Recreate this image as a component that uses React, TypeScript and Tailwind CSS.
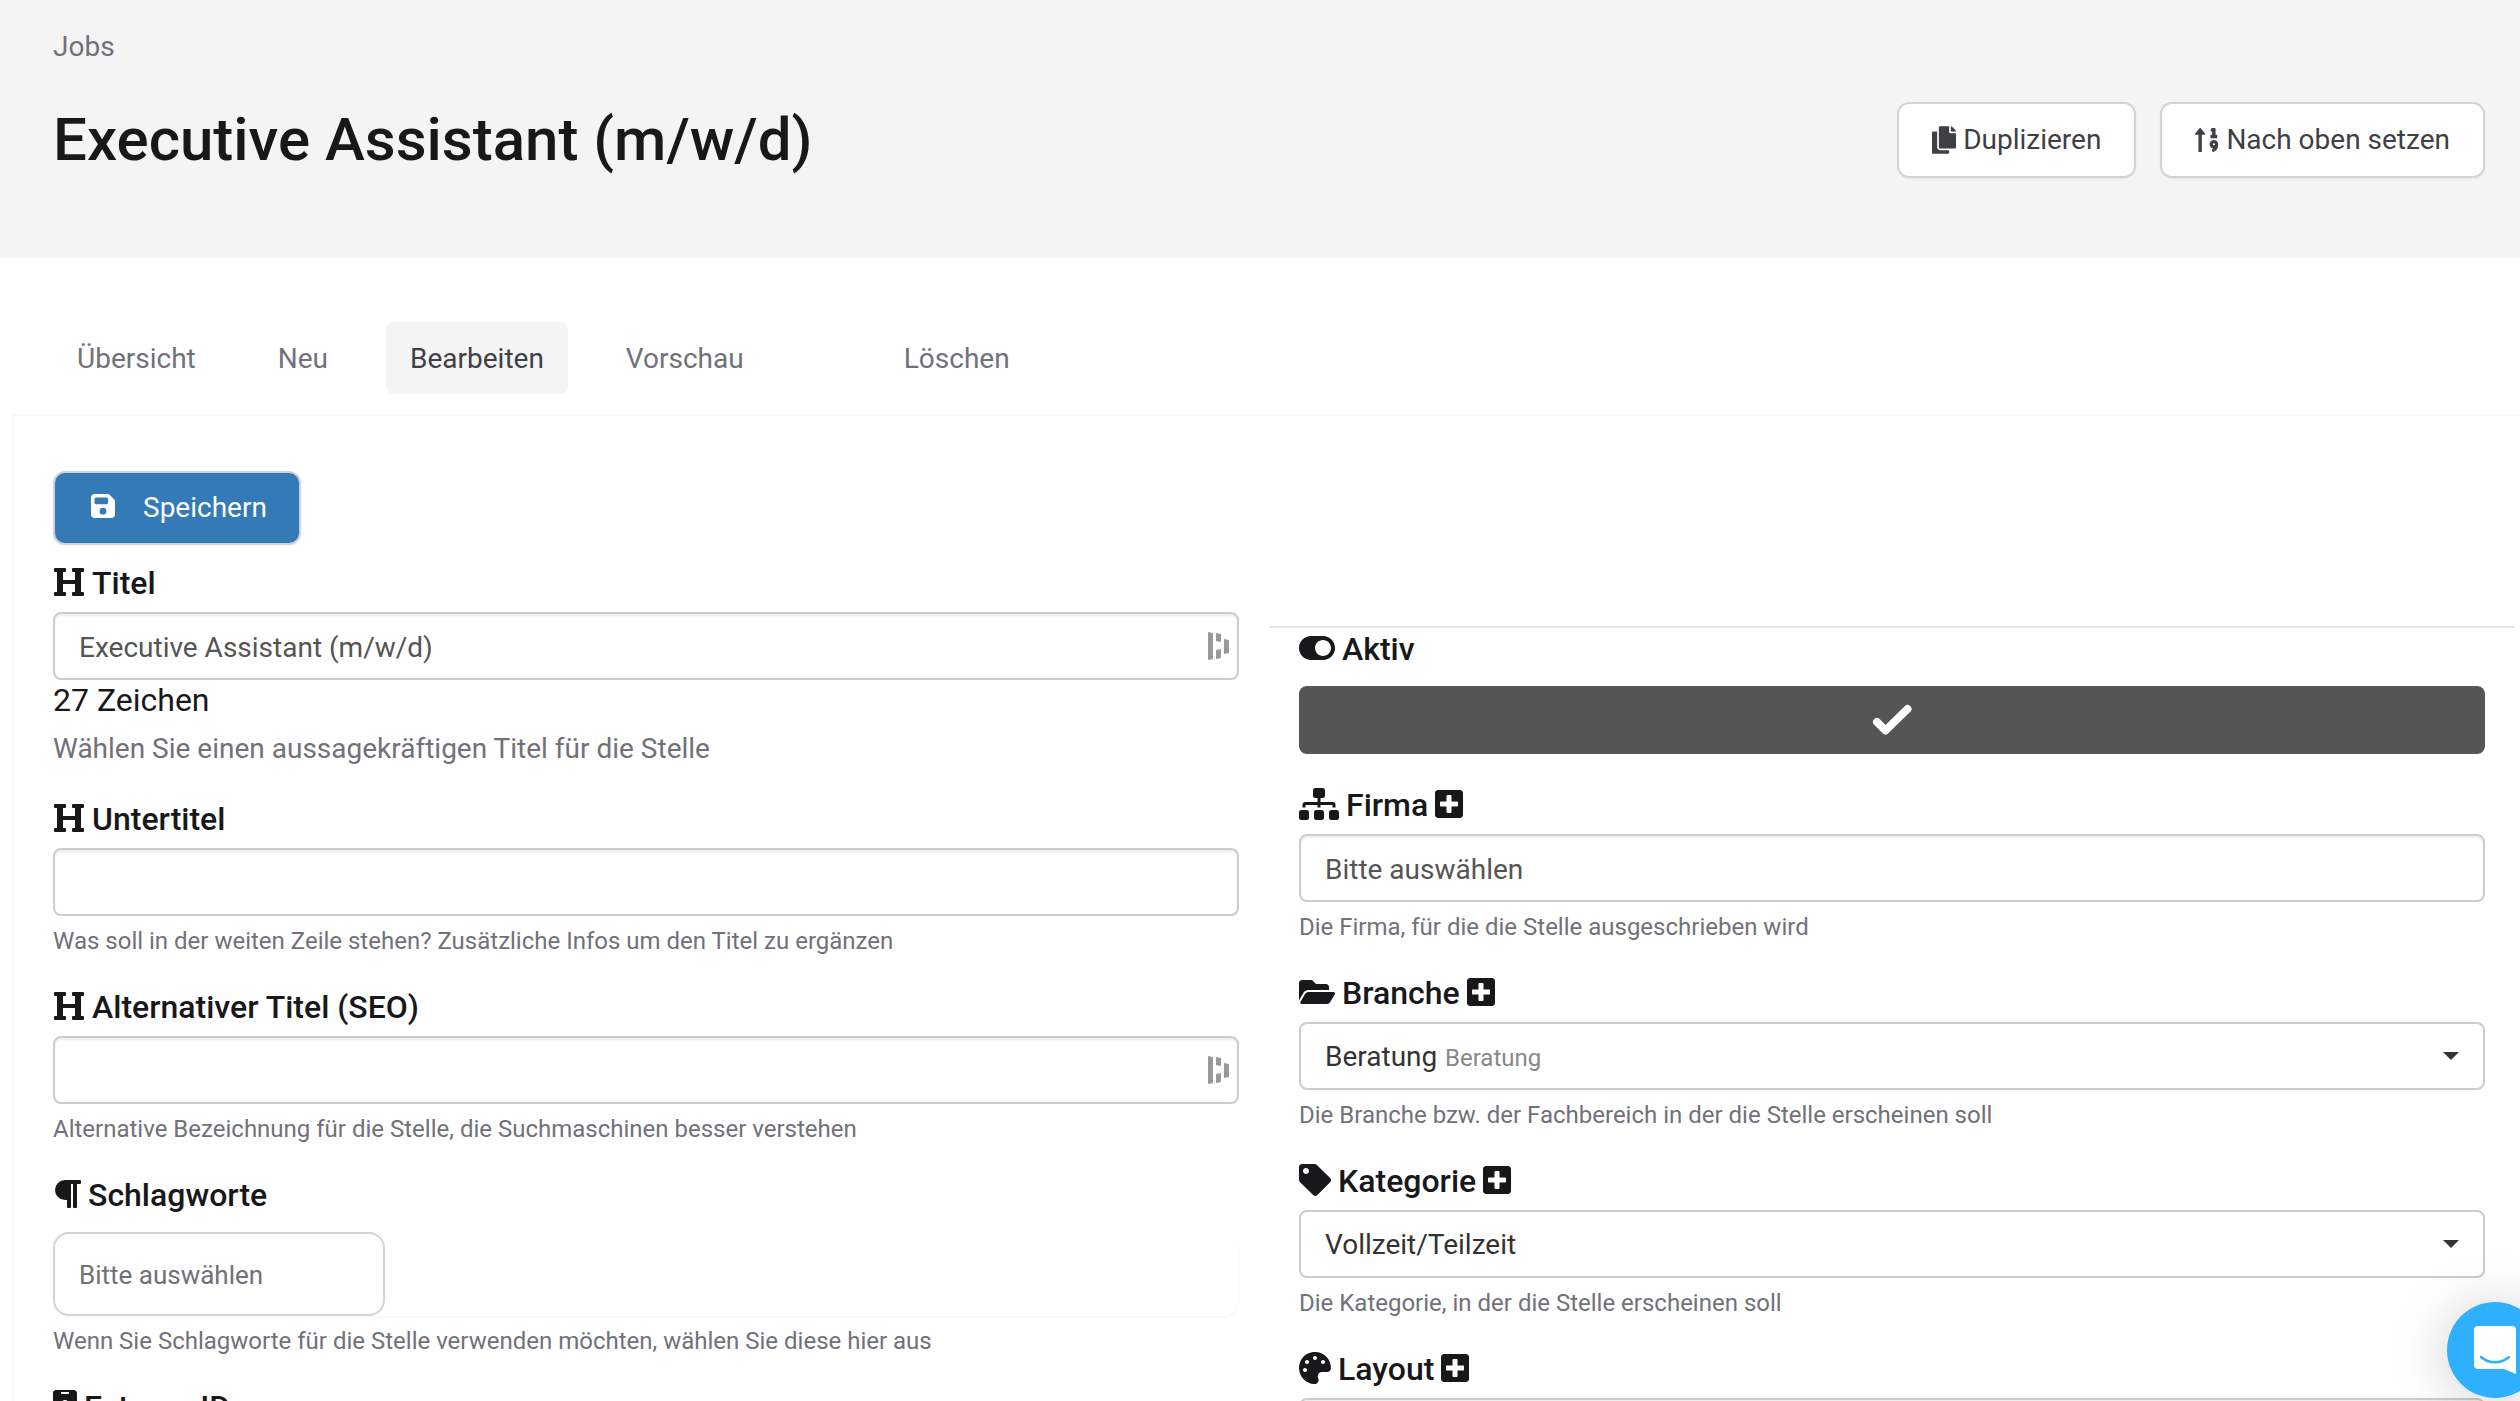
import { useState } from "react";
import type { ReactNode } from "react";
import {
  FaCopy,
  FaFolderOpen,
  FaHeading,
  FaIdBadge,
  FaPalette,
  FaParagraph,
  FaPlusSquare,
  FaSortNumericUp,
  FaTag,
  FaToggleOn,
} from "react-icons/fa";
import { FaFloppyDisk } from "react-icons/fa6";

const inputClass =
  "block h-[68px] w-full rounded-lg border-2 border-[#ccc] bg-white px-6 pt-[2px] text-[28px] text-[#555] shadow-[inset_0_2px_2px_rgba(0,0,0,0.075)] outline-none";

const headerButtonClass =
  "flex h-[76px] items-center gap-[7px] rounded-xl border-2 border-[#d4d4d8] bg-white px-[33px] shadow-xs";

const tabs = [
  { label: "Übersicht" },
  { label: "Neu" },
  { label: "Bearbeiten", active: true },
  { label: "Vorschau" },
];

function FieldLabel({
  id,
  icon,
  add,
  children,
}: {
  id: string;
  icon: ReactNode;
  add?: boolean;
  children: ReactNode;
}) {
  return (
    <div className="flex h-10 items-start gap-[7px] text-[32px] leading-[38px] font-medium text-[#18181b] [&_svg]:mt-[2px]">
      {icon}
      <label htmlFor={id}>{children}</label>
      {add && (
        <button type="button" aria-label="Hinzufügen">
          <FaPlusSquare className="w-7" />
        </button>
      )}
    </div>
  );
}

function Help({ children }: { children: ReactNode }) {
  return <p className="mt-2 text-[24px] leading-[34px] text-[#71717a]">{children}</p>;
}

function SitemapIcon() {
  return (
    <svg viewBox="0 0 40 32" className="h-8 w-10 fill-current" aria-hidden="true">
      <rect x="14" y="0" width="12" height="10" rx="2.5" />
      <rect x="0" y="22" width="10" height="10" rx="2.5" />
      <rect x="15" y="22" width="10" height="10" rx="2.5" />
      <rect x="30" y="22" width="10" height="10" rx="2.5" />
      <path
        d="M20 9v10.500M5 19.500v-2.500a1.500 1.500 0 0 1 1.500-1.500h27a1.500 1.500 0 0 1 1.500 1.500v2.500"
        fill="none"
        stroke="currentColor"
        strokeWidth="3"
      />
    </svg>
  );
}

function CheckIcon() {
  return (
    <svg viewBox="0 0 40 32" className="h-8 w-10" aria-hidden="true">
      <path
        d="M5 18l8.500 8.500L35.500 5"
        fill="none"
        stroke="#fff"
        strokeWidth="8"
        strokeLinecap="round"
        strokeLinejoin="round"
      />
    </svg>
  );
}

function FillMark() {
  return (
    <svg
      viewBox="0 0 21 28"
      className="pointer-events-none absolute top-5 right-[10px] h-7 w-[21px] fill-[#9b9995]"
      aria-hidden="true"
    >
      <path d="M0 0l5 1v26l-5 1zM8 1l5 1v8l-5-1zM8 18l5-1v9l-5 1zM16 7l5 1v13l-5 1z" />
    </svg>
  );
}

function SelectField({ id, value, hint }: { id: string; value: string; hint?: string }) {
  return (
    <div className="relative mt-2">
      <select
        id={id}
        className="block h-[68px] w-full appearance-none rounded-lg border-2 border-[#ccc] bg-white px-6 pt-[2px] text-[28px] text-[#333] outline-none"
      >
        <option>{value}</option>
      </select>
      {hint && (
        <span className="pointer-events-none absolute top-4 left-[146px] text-[24px] leading-10 text-[#888]">
          {hint}
        </span>
      )}
      <svg
        viewBox="0 0 16 8"
        className="pointer-events-none absolute top-[30px] right-[26px] h-2 w-4 fill-[#333]"
        aria-hidden="true"
      >
        <path d="M0 0h16l-8 8z" />
      </svg>
    </div>
  );
}

export default function App() {
  const [title, setTitle] = useState("Executive Assistant (m/w/d)");
  const [active, setActive] = useState(true);

  return (
    <div className="h-screen overflow-hidden bg-white font-[Roboto,sans-serif] text-[28px]">
      <header className="bg-[#f4f4f4] pt-7 pr-[35px] pb-20 pl-[53px]">
        <a href="#jobs" className="block leading-[38px] text-[#71717a]">
          Jobs
        </a>
        <div className="mt-9 flex items-center justify-between">
          <h1 className="text-[60px] leading-[76px] font-medium text-[#18181b]">
            Executive Assistant (m/w/d)
          </h1>
          <div className="flex gap-6 text-[#3f3f46]">
            <button type="button" className={headerButtonClass}>
              <FaCopy className="w-6" />
              Duplizieren
            </button>
            <button type="button" className={headerButtonClass}>
              <FaSortNumericUp className="w-6" />
              Nach oben setzen
            </button>
          </div>
        </div>
      </header>

      <nav className="mt-16 mb-5 flex h-[72px] gap-[34px] pl-[53px] leading-[74px] text-[#71717a]">
        {tabs.map((tab) => (
          <a
            key={tab.label}
            href="#tab"
            className={
              tab.active ? "rounded-lg bg-[#f4f4f4] px-6 text-[#3f3f46]" : "rounded-lg px-6"
            }
          >
            {tab.label}
          </a>
        ))}
        <a href="#tab" className="ml-[78px] rounded-lg px-6">
          Löschen
        </a>
      </nav>

      <form
        className="ml-3 border-t-2 border-l-2 border-[#f9f9f9] pt-[55px] pr-[5px] pl-[9px]"
        onSubmit={(e) => e.preventDefault()}
      >
        <div className="grid grid-cols-2">
          <div className="px-[30px]">
            <button
              type="submit"
              className="flex h-[74px] items-center gap-7 rounded-xl border-2 border-[#cdd3dc] bg-[#337ab7] pr-8 pl-9 text-white shadow-xs"
            >
              <FaFloppyDisk className="mb-1 w-6" />
              Speichern
            </button>

            <div className="mt-[19px]">
              <FieldLabel id="title" icon={<FaHeading />}>
                Titel
              </FieldLabel>
              <div className="relative mt-2">
                <input
                  id="title"
                  type="text"
                  value={title}
                  onChange={(e) => setTitle(e.target.value)}
                  className={inputClass}
                />
                <FillMark />
              </div>
              <p className="text-[32px] leading-10 text-[#18181b]">{title.length} Zeichen</p>
              <p className="mt-2 leading-[42px] text-[#71717a]">
                Wählen Sie einen aussagekräftigen Titel für die Stelle
              </p>
            </div>

            <div className="mt-[30px]">
              <FieldLabel id="subtitle" icon={<FaHeading />}>
                Untertitel
              </FieldLabel>
              <div className="mt-2">
                <input id="subtitle" type="text" className={inputClass} />
              </div>
              <Help>
                Was soll in der weiten Zeile stehen? Zusätzliche Infos um den Titel zu ergänzen
              </Help>
            </div>

            <div className="mt-[30px]">
              <FieldLabel id="seo" icon={<FaHeading />}>
                Alternativer Titel (SEO)
              </FieldLabel>
              <div className="relative mt-2">
                <input id="seo" type="text" className={inputClass} />
                <FillMark />
              </div>
              <Help>Alternative Bezeichnung für die Stelle, die Suchmaschinen besser verstehen</Help>
            </div>

            <div className="mt-[30px]">
              <FieldLabel id="tags" icon={<FaParagraph className="w-7" />}>
                Schlagworte
              </FieldLabel>
              <div className="mt-4 rounded-2xl shadow-xs">
                <input
                  id="tags"
                  type="text"
                  placeholder="Bitte auswählen"
                  className="block h-[84px] w-[332px] rounded-2xl border-2 border-[#d4d4d8] bg-white px-6 pt-[2px] text-[26px] outline-none placeholder:text-[#71717a]"
                />
              </div>
              <Help>Wenn Sie Schlagworte für die Stelle verwenden möchten, wählen Sie diese hier aus</Help>
            </div>

            <div className="mt-[30px]">
              <FieldLabel id="external" icon={<FaIdBadge className="w-6" />}>
                Externe ID
              </FieldLabel>
              <div className="mt-2">
                <input id="external" type="text" className={inputClass} />
              </div>
            </div>
          </div>

          <div className="pt-[155px]">
            <hr className="border-t-2 border-[#e2e2e2]" />
            <div className="px-[30px] pt-[2px]">
              <FieldLabel id="active" icon={<FaToggleOn className="w-9" />}>
                Aktiv
              </FieldLabel>
              <div className="relative mt-4">
                <input
                  id="active"
                  type="checkbox"
                  checked={active}
                  onChange={(e) => setActive(e.target.checked)}
                  className="block h-[68px] w-full appearance-none rounded-lg bg-[#ccc] checked:bg-[#555]"
                />
                {active && (
                  <span className="pointer-events-none absolute inset-0 flex items-center justify-center">
                    <CheckIcon />
                  </span>
                )}
              </div>

              <div className="mt-8">
                <FieldLabel id="company" icon={<SitemapIcon />} add>
                  Firma
                </FieldLabel>
                <div className="mt-2">
                  <input
                    id="company"
                    type="text"
                    defaultValue="Bitte auswählen"
                    className={inputClass}
                  />
                </div>
                <Help>Die Firma, für die die Stelle ausgeschrieben wird</Help>
              </div>

              <div className="mt-[30px]">
                <FieldLabel id="industry" icon={<FaFolderOpen className="w-9" />} add>
                  Branche
                </FieldLabel>
                <SelectField id="industry" value="Beratung" hint="Beratung" />
                <Help>Die Branche bzw. der Fachbereich in der die Stelle erscheinen soll</Help>
              </div>

              <div className="mt-[30px]">
                <FieldLabel id="category" icon={<FaTag />} add>
                  Kategorie
                </FieldLabel>
                <SelectField id="category" value="Vollzeit/Teilzeit" />
                <Help>Die Kategorie, in der die Stelle erscheinen soll</Help>
              </div>

              <div className="mt-[30px]">
                <FieldLabel id="layout" icon={<FaPalette />} add>
                  Layout
                </FieldLabel>
                <div className="mt-2">
                  <input id="layout" type="text" className={inputClass} />
                </div>
              </div>
            </div>
          </div>
        </div>
      </form>

      <button
        type="button"
        aria-label="Chat öffnen"
        className="fixed -right-[23px] bottom-[3px] flex size-24 items-center justify-center rounded-full bg-[#2eb0ff] shadow-[0_4px_60px_rgba(0,0,0,0.2)]"
      >
        <svg viewBox="0 0 42 48" className="h-12 w-[42px]" aria-hidden="true">
          <path
            d="M4 0h34a4 4 0 0 1 4 4v44l-12-5H4a4 4 0 0 1-4-4V4a4 4 0 0 1 4-4z"
            fill="#fff"
          />
          <path
            d="M7 31c8 7 20 7 28 0"
            fill="none"
            stroke="#2eb0ff"
            strokeWidth="2.4"
            strokeLinecap="round"
          />
        </svg>
      </button>
    </div>
  );
}
